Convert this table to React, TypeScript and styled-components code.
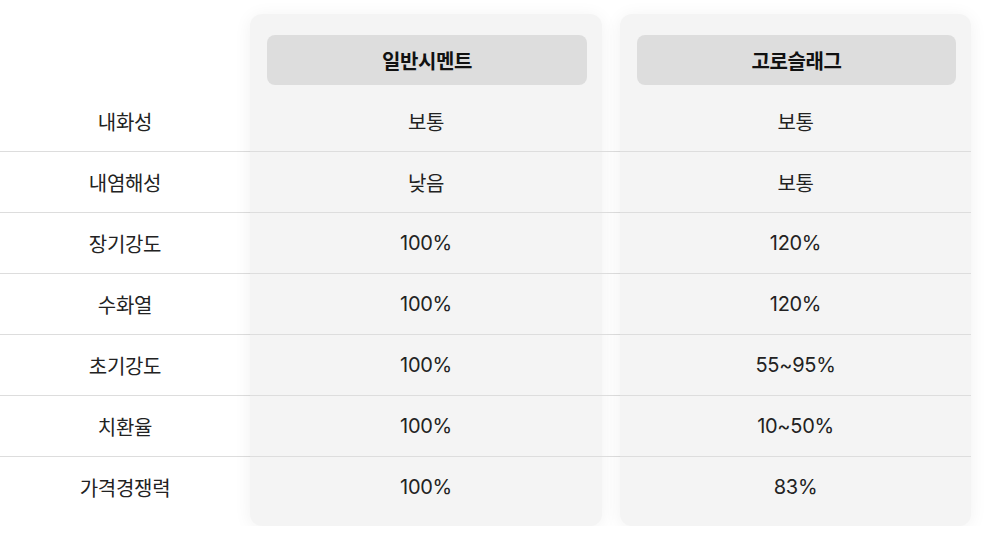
import styled, { createGlobalStyle } from "styled-components";

type Product = {
  name: string;
  values: string[];
};

const LABELS = ["내화성", "내염해성", "장기강도", "수화열", "초기강도", "치환율", "가격경쟁력"];

const PRODUCTS: Product[] = [
  {
    name: "일반시멘트",
    values: ["보통", "낮음", "100%", "100%", "100%", "100%", "100%"],
  },
  {
    name: "고로슬래그",
    values: ["보통", "보통", "120%", "120%", "55~95%", "10~50%", "83%"],
  },
];

const GlobalStyle = createGlobalStyle`
  html, body {
    margin: 0;
    padding: 0;
    background: #ffffff;
  }
  body {
    font-family: Inter, "Noto Sans CJK KR", "Noto Sans", sans-serif;
    color: #222222;
    -webkit-font-smoothing: antialiased;
  }
`;

/**
 * Comparison table: a label column and one card per product
 */
export default function App() {
  const last = LABELS.length - 1;
  return (
    <>
      <GlobalStyle />
      <Table>
        <Column>
          <HeadSpace />
          {LABELS.map((label, i) => (
            <Cell key={label} $last={i === last}>
              {label}
            </Cell>
          ))}
        </Column>

        <Card>
          <CardHead>
            <Pill>{PRODUCTS[0].name}</Pill>
          </CardHead>
          {PRODUCTS[0].values.map((v, i) => (
            <Cell key={i} $last={i === last}>
              {v}
            </Cell>
          ))}
        </Card>

        <Column>
          <HeadSpace />
          {LABELS.map((label, i) => (
            <Cell key={label} $last={i === last} />
          ))}
        </Column>

        <Card>
          <CardHead>
            <Pill>{PRODUCTS[1].name}</Pill>
          </CardHead>
          {PRODUCTS[1].values.map((v, i) => (
            <Cell key={i} $last={i === last}>
              {v}
            </Cell>
          ))}
        </Card>
      </Table>
    </>
  );
}

const Table = styled.div`
  display: grid;
  grid-template-columns: 250px 352px 18px 351px;
  align-items: start;
  padding-top: 14px;
  width: 971px;
`;

const Column = styled.div`
  display: flex;
  flex-direction: column;
`;

const HeadSpace = styled.div`
  height: 77px;
`;

const Card = styled.div`
  display: flex;
  flex-direction: column;
  background: #f4f4f4;
  border-radius: 12px;
  box-shadow: 0 2px 18px rgba(0, 0, 0, 0.06);
  padding-bottom: 8px;
`;

const CardHead = styled.div`
  height: 77px;
  box-sizing: border-box;
  padding: 21px 15px 6px 17px;
`;

const Pill = styled.div`
  height: 50px;
  display: flex;
  align-items: center;
  justify-content: center;
  background: #dddddd;
  border-radius: 8px;
  font-size: 20px;
  font-weight: 700;
  color: #111111;
  letter-spacing: -0.4px;
`;

const Cell = styled.div<{ $last?: boolean }>`
  height: 60px;
  display: flex;
  align-items: center;
  justify-content: center;
  font-size: 20px;
  letter-spacing: -0.3px;
  color: #222222;
  border-bottom: ${(p) => (p.$last ? "none" : "1px solid #dddddd")};
  margin-bottom: ${(p) => (p.$last ? "1px" : "0")};
`;
